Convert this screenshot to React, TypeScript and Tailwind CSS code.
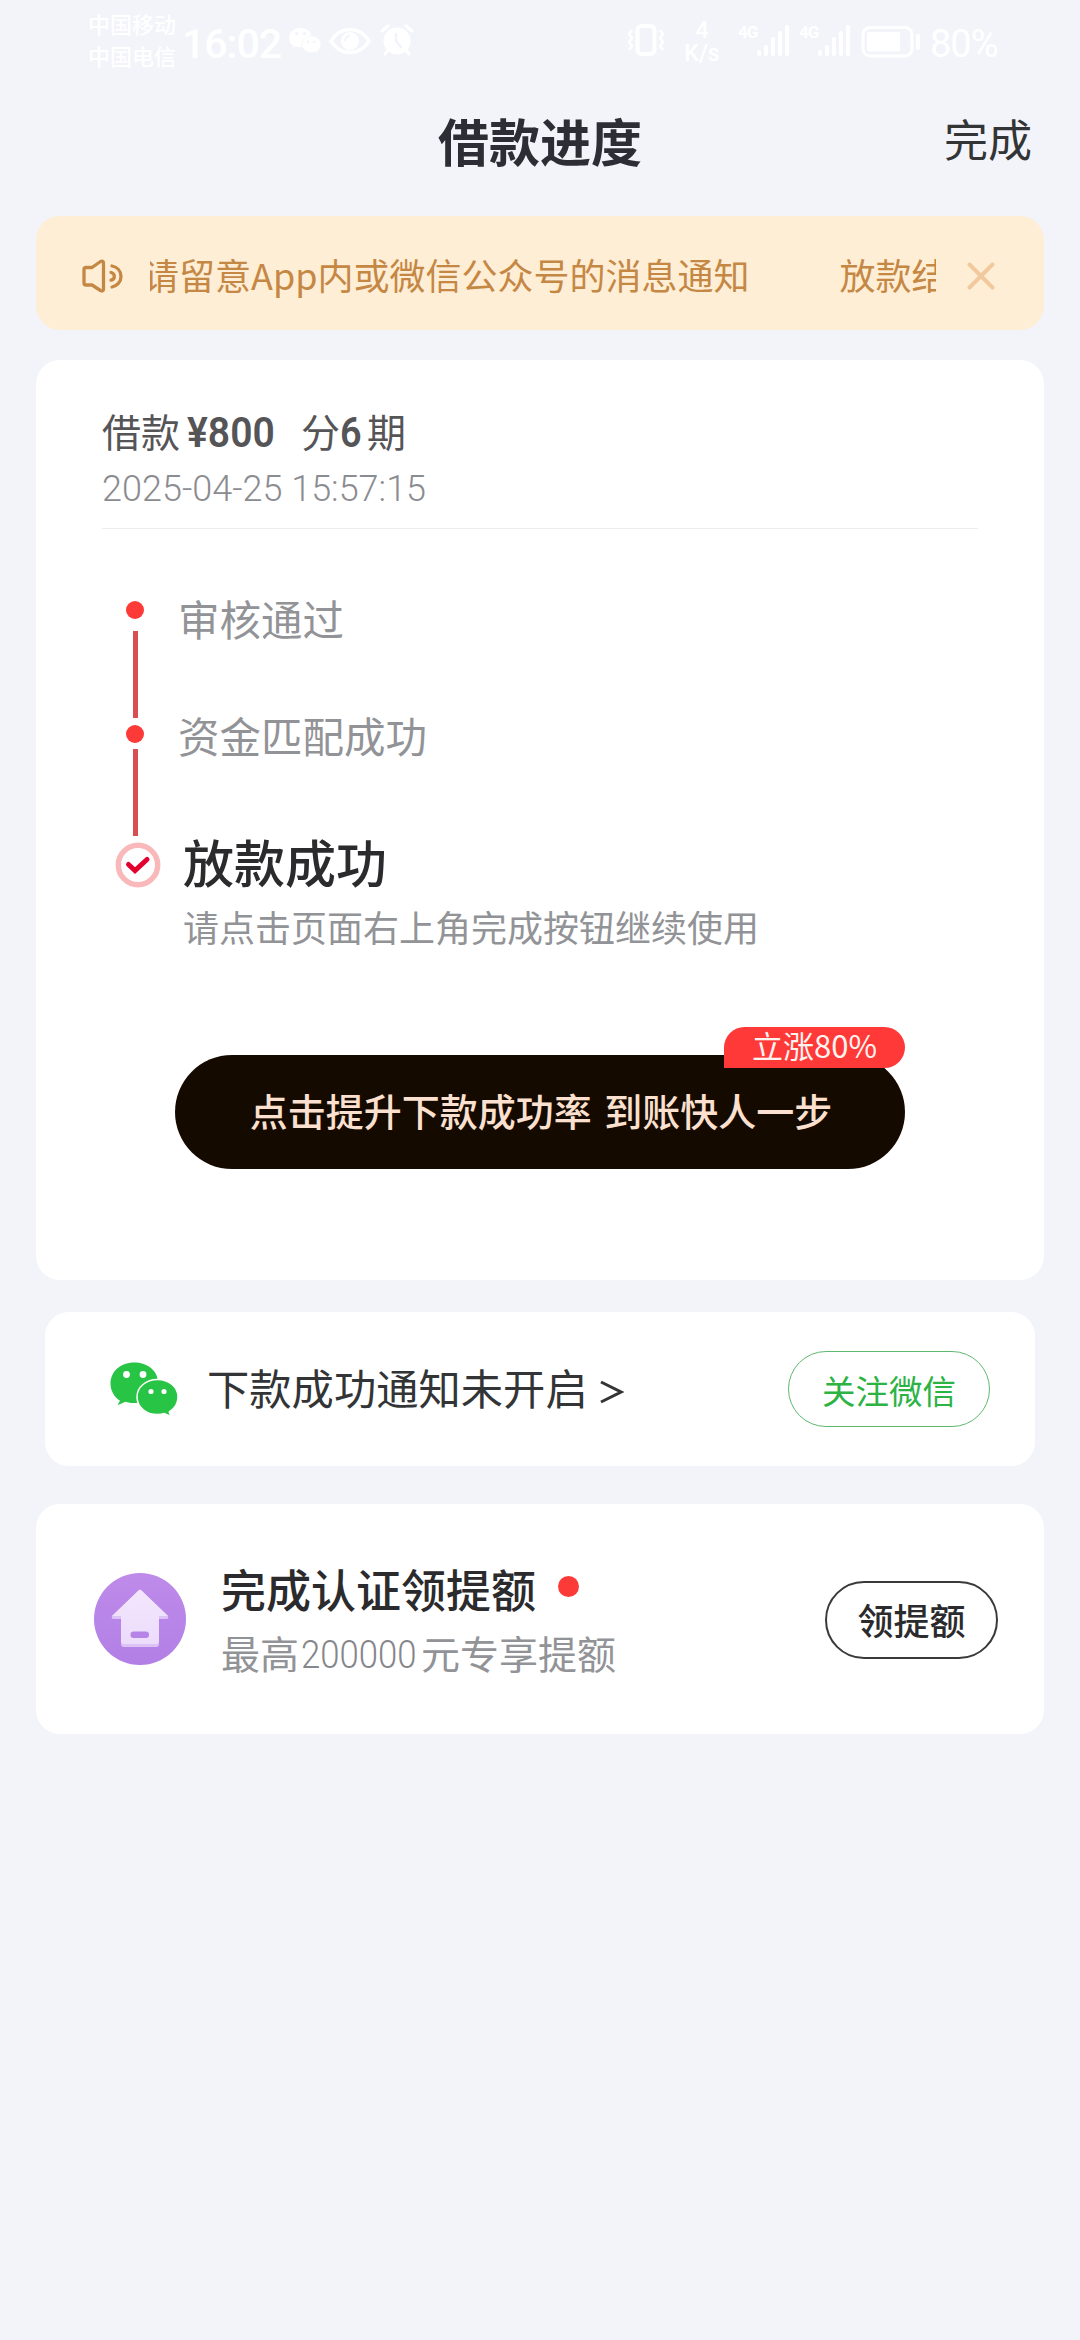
import React from "react";

function WechatGlyph({ className, gap }: { className: string; gap: string }) {
  return (
    <svg viewBox="0 0 68 54" className={className} fill="currentColor">
      <path d="M24 0.5C10.600.5.5 9.600.5 21.500c0 7.200 3.600 13.300 9.500 17.200L7.500 43.200l7.800-3.500c2.700.9 5.600 1.300 8.700 1.300 13.400 0 24-8.600 24-20.500S37.400.5 24 .5z" />
      <circle cx="16.500" cy="12.500" r="3.400" fill={gap} />
      <circle cx="33" cy="12.500" r="3.400" fill={gap} />
      <path
        d="M47.500 17.500c-11.500 0-20.500 7.600-20.500 17.500s9 17.500 20.500 17.500c2.400 0 4.800-.3 6.800-1l6.500 3-1.500-4.500c5.200-3.300 8.700-8.700 8.700-15 0-9.900-9-17.500-20.500-17.500z"
        stroke={gap}
        strokeWidth="1.500"
      />
      <circle cx="41" cy="29.500" r="2.600" fill={gap} />
      <circle cx="54" cy="29.500" r="2.600" fill={gap} />
    </svg>
  );
}

function Signal() {
  return (
    <div className="flex items-start">
      <span className="w-[19px] text-[17px] leading-[16px] font-bold tracking-[-1px] font-['Roboto',sans-serif] mt-[-1px]">
        4G
      </span>
      <svg viewBox="0 0 34 31" className="h-[31px] w-[34px]" fill="currentColor">
        <rect x="0" y="25" width="4" height="6" rx="2" />
        <rect x="7" y="20" width="4" height="11" rx="2" />
        <rect x="14" y="12" width="4" height="19" rx="2" />
        <rect x="21" y="6" width="4" height="25" rx="2" />
        <rect x="28" y="0" width="4" height="31" rx="2" />
      </svg>
    </div>
  );
}

function StatusBar() {
  return (
    <div className="flex h-[86px] items-start text-white">
      <div className="ml-[88px] mt-[7px] flex flex-col text-[22px] leading-[32px] font-medium">
        <span>中国移动</span>
        <span>中国电信</span>
      </div>
      <div className="ml-[6px] mt-[21px] w-[98px] text-[41px] leading-[46px] tracking-[-1px] font-medium font-['Roboto',sans-serif]">
        16:02
      </div>
      <WechatGlyph className="ml-[9px] mt-[27px] h-[27px] w-[32px]" gap="#f3f4fa" />
      <svg viewBox="0 0 42 28" className="ml-[8px] mt-[27px] h-[28px] w-[42px]" fill="none" stroke="currentColor" strokeWidth="3.500">
        <path d="M2 14C7 6 13 2.500 21 2.500S35 6 40 14c-5 8-11 11.500-19 11.500S7 22 2 14z" />
        <circle cx="21" cy="14" r="9" fill="currentColor" stroke="none" />
        <path d="M21 9a5 5 0 0 0-5 5" stroke="#f3f4fa" strokeWidth="2" />
      </svg>
      <svg viewBox="0 0 34 32" className="ml-[9px] mt-[24px] h-[32px] w-[34px]" fill="none" stroke="currentColor" strokeLinecap="round">
        <circle cx="17" cy="17" r="13.500" fill="currentColor" stroke="none" />
        <path d="M2 7l6-5M32 7l-6-5M8 26l-3 4M26 26l3 4" strokeWidth="3" />
        <path d="M16 10v7l5 6" stroke="#f3f4fa" strokeWidth="2.500" />
      </svg>

      <svg viewBox="0 0 38 32" className="ml-[213px] mt-[24px] h-[32px] w-[38px]" fill="none" stroke="currentColor">
        <rect x="10.500" y="2" width="17" height="28" rx="4" strokeWidth="4" />
        <path d="M5 6L2 10l3 4-3 4 3 4-3 4M33 6l3 4-3 4 3 4-3 4 3 4" strokeWidth="2.500" />
      </svg>
      <div className="ml-[18px] mt-[19px] flex w-[38px] flex-col items-center text-[23px] leading-[23px] font-medium font-['Roboto',sans-serif]">
        <span>4</span>
        <span>K/s</span>
      </div>
      <div className="ml-[17px] mt-[25px] flex gap-[8px]">
        <Signal />
        <Signal />
      </div>
      <svg viewBox="0 0 60 32" className="ml-[9px] mt-[26px] h-[32px] w-[60px]" fill="none" stroke="currentColor">
        <rect x="2" y="1.500" width="49" height="28.500" rx="7" strokeWidth="3" />
        <rect x="6" y="6" width="33" height="19.500" rx="2" fill="currentColor" stroke="none" />
        <rect x="55" y="8" width="4" height="16" rx="2" fill="currentColor" stroke="none" />
      </svg>
      <div className="ml-[9px] mt-[22px] text-[38px] leading-[44px] tracking-[-1px] font-['Roboto',sans-serif]">80%</div>
    </div>
  );
}

function Notice() {
  return (
    <section className="mx-[36px] flex h-[114px] items-center rounded-[24px] bg-[#ffeed6] pl-[46px] pt-[5px] text-[#c58844]">
      <svg viewBox="0 0 42 36" className="h-[36px] w-[42px] shrink-0" fill="none" stroke="currentColor" strokeWidth="3.300" strokeLinejoin="round" strokeLinecap="round">
        <path d="M4 9.500h6L18.500 3.500c1.800-1 3-.2 3 1.500v26c0 1.700-1.200 2.500-3 1.500L10 27H4c-1.500 0-2-.6-2-2V11.500c0-1.400.5-2 2-2z" />
        <path d="M30 8c5.200 1 9 5 9 10.500S35 28 30 29" />
        <path d="M29 14.500c2 .5 3.300 2 3.300 4s-1.300 3.300-3.300 3.700" />
      </svg>
      <div className="ml-[26px] h-[54px] w-[786px] overflow-hidden whitespace-nowrap text-[36px] leading-[54px]">
        <div className="ml-[-7px] mt-[-2px] flex gap-[90px]">
          <span>请留意App内或微信公众号的消息通知</span>
          <span>放款结果</span>
        </div>
      </div>
      <svg viewBox="0 0 28 28" className="ml-[31px] h-[28px] w-[28px] shrink-0" fill="none" stroke="#f2c89d" strokeWidth="4" strokeLinecap="round">
        <path d="M2.500 2.500l23 23M25.500 2.500l-23 23" />
      </svg>
    </section>
  );
}

function Timeline() {
  return (
    <div className="mt-[64px] flex">
      <div className="ml-[13px] flex w-[46px] flex-col pt-[8px]">
        <i className="ml-[11px] h-[18px] w-[18px] rounded-full bg-[#fc3a38]" />
        <i className="ml-[18px] mt-[12px] h-[87px] w-[4.500px] bg-[#d94e51]" />
        <i className="ml-[11px] mt-[7px] h-[18px] w-[18px] rounded-full bg-[#fc3a38]" />
        <i className="ml-[18px] mt-[6px] h-[87px] w-[4.500px] bg-[#d94e51]" />
        <svg viewBox="0 0 46 46" className="mt-[6px] h-[46px] w-[46px]" fill="none">
          <circle cx="23" cy="23" r="19.700" stroke="#f9b8b9" strokeWidth="5.500" />
          <path d="M13.500 22.500l6.500 6L32 17.500" stroke="#e3002f" strokeWidth="5" strokeLinecap="round" />
        </svg>
      </div>
      <div className="ml-[17px] flex flex-col whitespace-nowrap text-[#929397]">
        <div className="h-[50px] text-[41.500px] leading-[50px]">审核通过</div>
        <div className="mt-[67px] h-[50px] text-[41.500px] leading-[50px]">资金匹配成功</div>
        <div className="ml-[5px] mt-[71px] h-[60px] text-[51px] leading-[60px] font-medium text-[#2b2b2e]">放款成功</div>
        <div className="ml-[5px] mt-[13px] h-[44px] text-[36px] leading-[44px]">请点击页面右上角完成按钮继续使用</div>
      </div>
    </div>
  );
}

export default function App() {
  return (
    <main lang="zh-CN" className="h-[2340px] w-[1080px] overflow-hidden bg-[#f3f4fa] font-['Noto_Sans_CJK_SC',sans-serif]">
      <StatusBar />
      <header className="grid h-[130px] grid-cols-[1fr_auto_1fr] pt-[24px]">
        <h1 className="col-start-2 text-[51px] leading-[60px] font-bold text-[#2d2d35]">借款进度</h1>
        <span className="mr-[48px] justify-self-end text-[44px] leading-[56px] text-[#333436]">完成</span>
      </header>

      <Notice />

      <section className="mx-[36px] mt-[30px] h-[920px] rounded-[24px] bg-white px-[66px] pt-[46px]">
        <div className="flex h-[48px] text-[39px] leading-[48px] text-[#555557]">
          <span>借款</span>
          <span className="ml-[7px] w-[88px] origin-left scale-x-[0.930] whitespace-nowrap pt-[3px] text-[42px] font-semibold font-['Roboto',sans-serif]">¥800</span>
          <span className="ml-[26px]">分</span>
          <span className="w-[27px] origin-left scale-x-[0.900] pt-[3px] text-[42px] font-semibold font-['Roboto',sans-serif]">6</span>
          <span>期</span>
        </div>
        <div className="mt-[15px] h-[40px] w-max whitespace-nowrap text-[36px] leading-[40px] font-light text-[#8b8c90] font-['Roboto',sans-serif]">
          2025-04-25 15:57:15
        </div>
        <div className="mt-[19px] h-px bg-[#ededee]" />
        <Timeline />
        <div className="relative mx-auto mt-[107px] h-[114px] w-[730px] rounded-full bg-[#150a00] pl-[2px] text-center text-[38px] leading-[109px] font-medium text-[#fce0cf] [word-spacing:4px]">
          点击提升下款成功率 到账快人一步
          <span className="absolute right-0 top-[-28px] h-[41px] w-[181px] rounded-[21px] rounded-bl-none bg-[#ff3938] text-[31px] leading-[35px] font-normal text-[#fff3ef]">
            立涨80%
          </span>
        </div>
      </section>

      <section className="mx-[45px] mt-[32px] flex h-[154px] items-center rounded-[24px] bg-white pl-[65px] pr-[45px]">
        <WechatGlyph className="h-[54px] w-[68px] text-[#28c445]" gap="#ffffff" />
        <span className="ml-[29px] mt-[-5px] whitespace-nowrap text-[42.300px] leading-[60px] text-[#333436]">下款成功通知未开启</span>
        <svg viewBox="0 0 24 24" className="ml-[12px] mt-[6px] h-[24px] w-[24px]" fill="none" stroke="#333436" strokeWidth="3">
          <path d="M1 2l20 10L1 22" />
        </svg>
        <button className="ml-auto h-[76px] w-[202px] rounded-full border border-[#5fb86f] text-[33.500px] leading-[69px] text-[#2cb344]">关注微信</button>
      </section>

      <section className="mx-[36px] mt-[38px] flex h-[230px] items-center rounded-[24px] bg-white pl-[58px] pr-[46px]">
        <svg viewBox="0 0 92 92" className="h-[92px] w-[92px]">
          <defs>
            <linearGradient id="disc" x1="0" y1="0" x2="0" y2="1">
              <stop offset="0" stopColor="#be8bea" />
              <stop offset="1" stopColor="#b27fe6" />
            </linearGradient>
            <linearGradient id="house" x1="0" y1="0" x2="0" y2="1">
              <stop offset="0" stopColor="#f3e6fd" />
              <stop offset="1" stopColor="#ecdcfb" />
            </linearGradient>
          </defs>
          <circle cx="46" cy="46" r="46" fill="url(#disc)" />
          <path d="M44.500 17.500q1.500-1.500 3 0L74 43q1 3-1.500 3H65v25q0 3-3 3H30q-3 0-3-3V46h-7.500Q17 46 18 43z" fill="#dcc2f5" />
          <path d="M44.500 17.500q1.500-1.500 3 0L74 43H65v25q0 3-3 3H30q-3 0-3-3V43h-9z" fill="url(#house)" />
          <rect x="36.500" y="58.500" width="18.500" height="6.500" rx="3.200" fill="#b683e6" />
        </svg>
        <div className="ml-[35px] flex flex-col whitespace-nowrap">
          <div className="flex h-[56px] items-center">
            <span className="text-[45px] leading-[56px] font-medium text-[#2b2b2e]">完成认证领提额</span>
            <i className="ml-[22px] mt-[-5px] h-[21px] w-[21px] rounded-full bg-[#fc3a38]" />
          </div>
          <div className="mt-[10px] flex h-[50px] text-[39px] leading-[50px] text-[#929397]">
            <span>最高</span>
            <span className="ml-[2px] w-[120px] origin-left scale-x-[0.890] pt-[3px] font-light text-[#85868a] font-['Roboto',sans-serif]">200000</span>
            <span>元专享提额</span>
          </div>
        </div>
        <button className="ml-auto mt-[1px] h-[78px] w-[173px] rounded-full border-2 border-[#3a3a3d] text-[36px] leading-[69px] font-medium text-[#2b2b2e]">领提额</button>
      </section>
    </main>
  );
}
